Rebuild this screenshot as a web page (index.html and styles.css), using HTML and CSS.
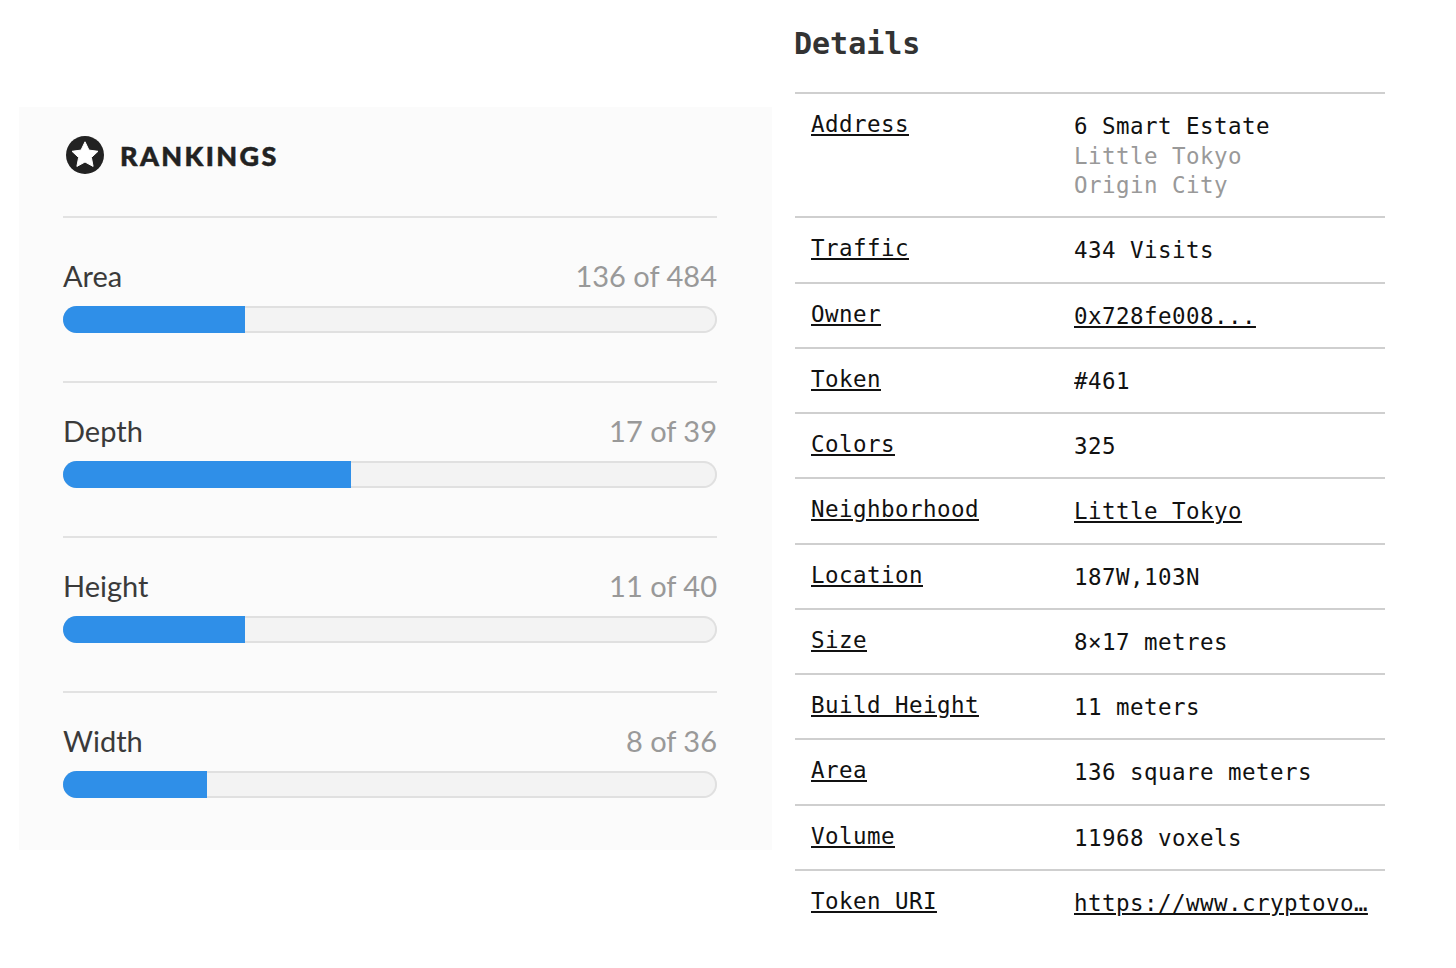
FILE: index.html
```html
<!DOCTYPE html>
<html lang="en">
<head>
<meta charset="utf-8">
<title>Parcel details</title>
<link rel="stylesheet" href="styles.css">
</head>
<body>
<div class="page">
  <section class="rankings">
    <header class="rank-head">
      <svg class="star" viewBox="0 0 40 40" width="40" height="40" aria-hidden="true">
        <circle cx="20" cy="20" r="19" fill="#222"/>
        <path d="M20 6.8l4 8.3 9 1.2-6.6 6.2 1.7 8.9-8.1-4.4-8.1 4.4 1.7-8.9-6.6-6.2 9-1.2z" fill="#fff" stroke="#fff" stroke-width="1" stroke-linejoin="round"/>
      </svg>
      <h2>RANKINGS</h2>
    </header>
    <div class="rank first">
      <div class="rank-top"><span>Area</span><span class="count">136 of 484</span></div>
      <div class="bar"><div class="fill" style="width:27.8%"></div></div>
    </div>
    <div class="rank">
      <div class="rank-top"><span>Depth</span><span class="count">17 of 39</span></div>
      <div class="bar"><div class="fill" style="width:44%"></div></div>
    </div>
    <div class="rank">
      <div class="rank-top"><span>Height</span><span class="count">11 of 40</span></div>
      <div class="bar"><div class="fill" style="width:27.8%"></div></div>
    </div>
    <div class="rank">
      <div class="rank-top"><span>Width</span><span class="count">8 of 36</span></div>
      <div class="bar"><div class="fill" style="width:22%"></div></div>
    </div>
  </section>
  <section class="details">
    <h1>Details</h1>
    <table>
      <tr class="tall"><th><a href="#">Address</a></th><td>6 Smart Estate<br><span class="muted">Little Tokyo<br>Origin City</span></td></tr>
      <tr><th><a href="#">Traffic</a></th><td>434 Visits</td></tr>
      <tr><th><a href="#">Owner</a></th><td><a href="#">0x728fe008...</a></td></tr>
      <tr><th><a href="#">Token</a></th><td>#461</td></tr>
      <tr><th><a href="#">Colors</a></th><td>325</td></tr>
      <tr><th><a href="#">Neighborhood</a></th><td><a href="#">Little Tokyo</a></td></tr>
      <tr><th><a href="#">Location</a></th><td>187W,103N</td></tr>
      <tr><th><a href="#">Size</a></th><td>8×17 metres</td></tr>
      <tr><th><a href="#">Build Height</a></th><td>11 meters</td></tr>
      <tr><th><a href="#">Area</a></th><td>136 square meters</td></tr>
      <tr><th><a href="#">Volume</a></th><td>11968 voxels</td></tr>
      <tr><th><a href="#">Token URI</a></th><td><a href="#">https://www.cryptovo…</a></td></tr>
    </table>
  </section>
</div>
</body>
</html>
```
FILE: styles.css
```css
* { box-sizing: border-box; }
html, body { margin: 0; padding: 0; background: #fff; }
.page {
  display: flex;
  align-items: flex-start;
  width: 1456px;
  height: 968px;
  overflow: hidden;
  padding-left: 19px;
}
.rankings {
  width: 753px;
  height: 743px;
  margin-top: 107px;
  padding: 28px 55px 0 44px;
  background: #fbfbfb;
  font-family: "Lato", sans-serif;
  color: #333;
}
.rank-head {
  display: flex;
  align-items: center;
  gap: 15px;
  height: 83px;
  padding: 0 0 41px 2px;
  border-bottom: 2px solid #e2e2e2;
}
.rank-head h2 {
  margin: 0;
  font-size: 27px;
  font-weight: 900;
  letter-spacing: 2.4px;
  -webkit-text-stroke: 0.5px #222;
  color: #222;
}
.rank { height: 155px; padding-top: 28px; border-bottom: 2px solid #e2e2e2; }
.rank.first { height: 165px; padding-top: 38px; }
.rank:last-child { border-bottom: 0; }
.rank-top {
  display: flex;
  justify-content: space-between;
  align-items: baseline;
  height: 40px;
  line-height: 40px;
  font-size: 29px;
  font-weight: 400;
  color: #3a3a3a;
}
.count { color: #999; }
.bar {
  position: relative;
  height: 27px;
  margin-top: 10px;
  background: #f3f3f3;
  box-shadow: inset 0 0 0 2px #e0e0e0;
  border-radius: 14px;
  overflow: hidden;
}
.fill { height: 100%; background: #2f8fe8; }
.details {
  width: 590px;
  margin-left: 23px;
  font-family: "DejaVu Sans Mono", "Liberation Mono", monospace;
  font-size: 22.5px;
  letter-spacing: 0.45px;
}
.details h1 {
  margin: 0;
  height: 92.3px;
  padding-top: 26px;
  font-size: 30px;
  line-height: 36px;
  font-weight: 700;
  letter-spacing: 0;
  text-indent: -1px;
  color: #333;
}
table { width: 590px; border-collapse: collapse; table-layout: fixed; }
tr { border-top: 2px solid #cfcfcf; height: 65.25px; }
tr.tall { height: 124px; }
th, td { vertical-align: top; padding: 18px 0 0 16px; text-align: left; font-weight: 400; line-height: 29.3px; color: #111; white-space: nowrap; }
th { width: 279px; padding-top: 16px; }
td { padding-left: 0; overflow: hidden; }
a { color: #111; }
.muted { color: #999; }
```
